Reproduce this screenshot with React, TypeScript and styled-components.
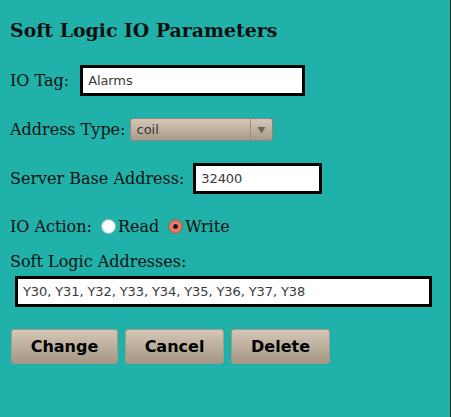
import React from "react";
import styled, { createGlobalStyle } from "styled-components";

const Global = createGlobalStyle`
  html, body { margin: 0; padding: 0; background: #20b2aa; }
  body { font-family: "DejaVu Serif", serif; font-size: 16px; color: #111; }
`;

const Page = styled.div`
  box-sizing: border-box;
  width: 451px;
  height: 417px;
  padding: 0 0 0 10px;
  background: #20b2aa;
  border-right: 1px solid #0f2a2a;
`;

const Title = styled.h3`
  margin: 0;
  padding-top: 19px;
  font-family: "DejaVu Serif", serif;
  font-weight: bold;
  font-size: 18.9px;
  line-height: 22px;
  color: #111;
`;

const Row = styled.div<{ $top: number; $h?: number; $gap?: number }>`
  display: flex;
  align-items: center;
  gap: ${(p) => p.$gap ?? 8}px;
  margin-top: ${(p) => p.$top}px;
  height: ${(p) => p.$h ?? 31}px;
`;

const Label = styled.span`
  font-family: "DejaVu Serif", serif;
  font-size: 16px;
  color: #111;
  white-space: nowrap;
`;

const TextBox = styled.div<{ $w: number }>`
  box-sizing: border-box;
  width: ${(p) => p.$w}px;
  height: 31px;
  border: 3px solid #000;
  background: #fff;
  display: flex;
  align-items: center;
  padding-left: 5px;
  font-family: "DejaVu Sans", sans-serif;
  font-size: 13px;
  letter-spacing: -0.1px;
  color: #3a3a3a;
`;

const Select = styled.div`
  box-sizing: border-box;
  width: 143px;
  height: 23px;
  border: 1px solid #8f8676;
  border-radius: 3px;
  background: linear-gradient(#d3c7b7, #a99b89);
  display: flex;
  align-items: stretch;
  font-family: "DejaVu Sans", sans-serif;
  font-size: 13px;
  color: #3a3430;
`;

const SelectText = styled.span`
  flex: 1;
  display: flex;
  align-items: center;
  padding-left: 5px;
`;

const SelectArrow = styled.span`
  width: 21px;
  border-left: 1px solid #9c907f;
  display: flex;
  align-items: center;
  justify-content: center;
`;

const Radio = styled.span<{ $on?: boolean }>`
  box-sizing: border-box;
  width: 13px;
  height: 13px;
  border-radius: 50%;
  display: inline-flex;
  align-items: center;
  justify-content: center;
  background: ${(p) => (p.$on ? "radial-gradient(circle, #f59a86, #e0533e)" : "#fff")};
  box-shadow: 0 0 1px 1px ${(p) => (p.$on ? "rgba(200,60,40,0.5)" : "rgba(200,200,200,0.7)")};
  &::after {
    content: "";
    display: ${(p) => (p.$on ? "block" : "none")};
    width: 5px;
    height: 5px;
    border-radius: 50%;
    background: #2a1a16;
  }
`;

const RadioItem = styled.label`
  display: inline-flex;
  align-items: center;
  gap: 3px;
  font-family: "DejaVu Serif", serif;
  font-size: 16px;
`;

const Block = styled.div<{ $top: number }>`
  margin-top: ${(p) => p.$top}px;
`;

const WideRow = styled.div`
  margin-top: 5px;
  padding-left: 5px;
`;

const Buttons = styled.div`
  display: flex;
  gap: 7px;
  margin-top: 22px;
  padding-left: 1px;
`;

const Button = styled.button<{ $w?: number }>`
  box-sizing: border-box;
  width: ${(p) => p.$w ?? 99}px;
  height: 35px;
  border: 1px solid #a69a88;
  border-radius: 3px;
  background: linear-gradient(#d4c7b6, #a59784);
  font-family: "DejaVu Sans", sans-serif;
  font-weight: bold;
  font-size: 16px;
  color: #000;
  padding: 0;
  box-shadow: 0 0 1px rgba(0, 0, 0, 0.15);
`;

export default function App() {
  return (
    <>
      <Global />
      <Page>
        <Title>Soft Logic IO Parameters</Title>
        <Row $top={24} $gap={11}>
          <Label>IO Tag:</Label>
          <TextBox $w={225}>Alarms</TextBox>
        </Row>
        <Row $top={22} $h={23} $gap={5}>
          <Label>Address Type:</Label>
          <Select>
            <SelectText>coil</SelectText>
            <SelectArrow>
              <svg width="9" height="8" viewBox="0 0 9 8">
                <path d="M0.5 1 L8.5 1 L4.5 7.5 Z" fill="#6b6459" />
              </svg>
            </SelectArrow>
          </Select>
        </Row>
        <Row $top={22} $gap={9}>
          <Label>Server Base Address:</Label>
          <TextBox $w={129}>32400</TextBox>
        </Row>
        <Row $top={17} $h={31} $gap={10}>
          <Label>IO Action:</Label>
          <RadioItem>
            <Radio />
            <span>Read</span>
          </RadioItem>
          <RadioItem>
            <Radio $on />
            <span>Write</span>
          </RadioItem>
        </Row>
        <Block $top={10}>
          <Label>Soft Logic Addresses:</Label>
        </Block>
        <WideRow>
          <TextBox $w={417}>Y30, Y31, Y32, Y33, Y34, Y35, Y36, Y37, Y38</TextBox>
        </WideRow>
        <Buttons>
          <Button $w={107}>Change</Button>
          <Button>Cancel</Button>
          <Button>Delete</Button>
        </Buttons>
      </Page>
    </>
  );
}
